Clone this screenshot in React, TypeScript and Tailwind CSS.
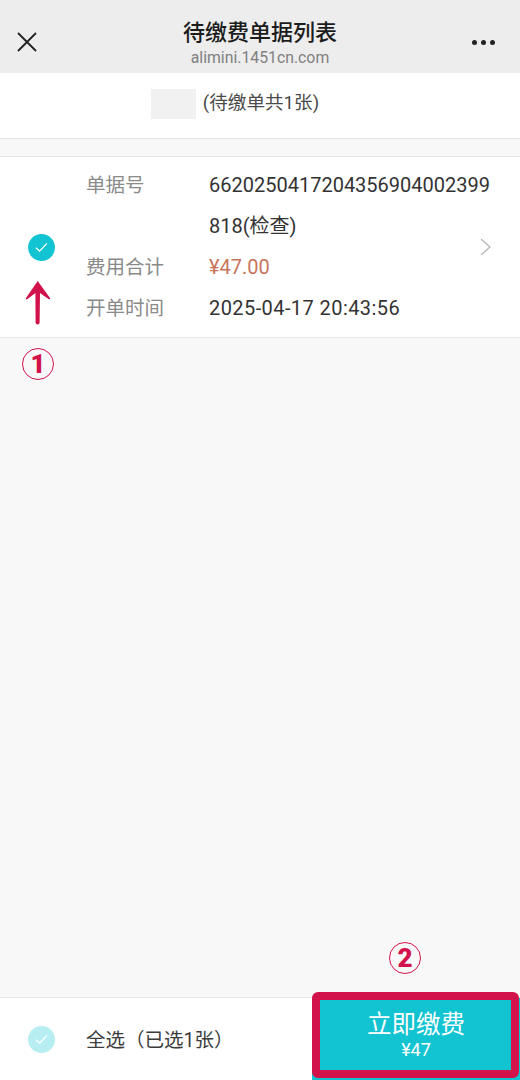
const font = "font-['Roboto','Noto_Sans_CJK_SC',sans-serif]";

const CheckCircle = ({ light }: { light?: boolean }) => (
  <div className={`w-[27px] h-[27px] rounded-full flex items-center justify-center ${light ? "bg-[#b7eef1]" : "bg-[#12c3d2]"}`}>
    <svg width="13" height="11" viewBox="0 0 13 11" fill="none" stroke="white" strokeWidth="1.3">
      <path d="M1 5.8 L4.6 9.2 L12 1.4" />
    </svg>
  </div>
);

const Circled = ({ n, className }: { n: string; className: string }) => (
  <div className={`absolute w-[32px] h-[32px] rounded-full border border-[#d2124a] flex items-center justify-center text-[#d2124a] text-[26px] font-black leading-none ${className}`}>
    {n}
  </div>
);

function Row({ label, children }: { label?: string; children: React.ReactNode }) {
  return (
    <div className="flex">
      <div className="w-[123px] shrink-0 text-[19.5px] leading-[41px] text-[#8a8a8a]">{label}</div>
      {children}
    </div>
  );
}

export default function App() {
  return (
    <div className={`relative w-[520px] h-[1080px] overflow-hidden flex flex-col bg-[#f8f8f8] ${font}`}>
      <div className="h-[73px] shrink-0 bg-[#ededed] grid grid-cols-[1fr_auto_1fr] items-center pl-[17px] pr-[25px]">
        <svg width="20" height="20" viewBox="0 0 20 20" stroke="#222" strokeWidth="1.8" className="mt-[10px]">
          <path d="M1 1 L19 19 M19 1 L1 19" />
        </svg>
        <div className="flex flex-col items-center pt-[12px] ml-[8px]">
          <div className="text-[22px] leading-[30px] font-medium text-[#1c1c1c]">待缴费单据列表</div>
          <div className="text-[15.8px] leading-[20px] text-[#808080]">alimini.1451cn.com</div>
        </div>
        <div className="flex justify-end gap-[4px] mt-[11px]">
          <span className="w-[5px] h-[5px] rounded-full bg-[#222]" />
          <span className="w-[5px] h-[5px] rounded-full bg-[#222]" />
          <span className="w-[5px] h-[5px] rounded-full bg-[#222]" />
        </div>
      </div>

      <div className="h-[66px] shrink-0 bg-white border-b border-[#e2e2e2] flex items-center justify-center gap-[7px] pb-[4px] pr-[50px]">
        <div className="w-[45px] h-[30px] bg-[#f1f1f1]" />
        <div className="text-[18.6px] text-[#4a4a4a]">(待缴单共1张)</div>
      </div>

      <div className="mt-[17px] shrink-0 bg-white border-y border-[#e8e8e8] flex items-center py-[8px]">
        <div className="w-[86px] shrink-0 pl-[28px]">
          <CheckCircle />
        </div>
        <div className="w-[405px] shrink-0">
          <Row label="单据号">
            <div className="w-[282px] break-all text-[20px] leading-[41px] text-[#333]">6620250417204356904002399818(检查)</div>
          </Row>
          <Row label="费用合计">
            <div className="text-[20px] leading-[41px] text-[#c8745c]">¥47.00</div>
          </Row>
          <Row label="开单时间">
            <div className="text-[20px] leading-[41px] tracking-[0.42px] text-[#333]">2025-04-17 20:43:56</div>
          </Row>
        </div>
        <svg width="11" height="18" viewBox="0 0 11 18" fill="none" stroke="#b4b4b4" strokeWidth="1.2" className="-ml-[11px]">
          <path d="M1 1 L10 9 L1 17" />
        </svg>
      </div>

      <div className="flex-1" />

      <div className="h-[83px] shrink-0 bg-white border-t border-[#e8e8e8] flex items-stretch">
        <div className="flex-1 flex items-center">
          <div className="w-[86px] shrink-0 pl-[28px]">
            <CheckCircle light />
          </div>
          <div className="text-[19.5px] text-[#3c3c3c] mt-[3px]">全选（已选1张）</div>
        </div>
        <div className="w-[208px] bg-[#12c3d2] flex flex-col items-center justify-center text-white pb-[9px]">
          <div className="text-[24.5px] leading-[30px]">立即缴费</div>
          <div className="text-[18px] leading-[20px]">¥47</div>
        </div>
      </div>

      {/* annotations on top of the screenshot */}
      <svg width="28" height="46" viewBox="0 0 28 46" fill="#d2124a" className="absolute left-[24px] top-[280px]">
        <path d="M13.7 1 L26 18 Q26.5 20 24.5 19 L16 13 L15.6 43 Q13.5 46 11.6 43 L11.4 13 L3.5 19 Q1.5 20 2 18 Z" />
      </svg>
      <Circled n="1" className="left-[22px] top-[348px]" />
      <Circled n="2" className="left-[389px] top-[942px]" />
      <div className="absolute left-[312px] top-[992px] w-[207px] h-[86px] border-[8px] border-[#d2124a] rounded-[6px]" />
    </div>
  );
}
